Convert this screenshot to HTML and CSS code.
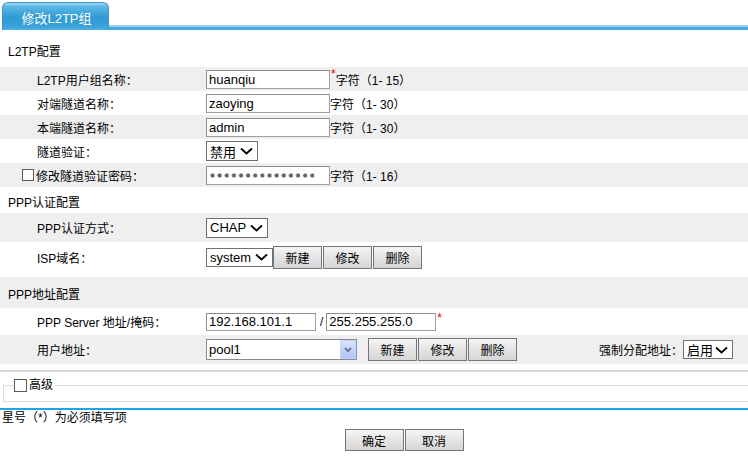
FILE: index.html
```html
<!DOCTYPE html>
<html lang="zh-CN">
<head>
<meta charset="utf-8">
<title>修改L2TP组</title>
<link rel="stylesheet" href="styles.css">
</head>
<body>
<div class="tabbar">
  <div class="tab">修改L2TP组</div>
  <div class="tabline"></div>
</div>

<div class="sect s1">L2TP配置</div>
<div class="row alt">
  <div class="label">L2TP用户组名称：</div>
  <div class="field"><span class="input w124">huanqiu</span><span class="req">*</span><span class="hint">字符<span class="fw">（</span>1- 15<span class="fw">）</span></span></div>
</div>
<div class="row">
  <div class="label">对端隧道名称：</div>
  <div class="field"><span class="input w124">zaoying</span><span class="hint">字符<span class="fw">（</span>1- 30<span class="fw">）</span></span></div>
</div>
<div class="row alt">
  <div class="label">本端隧道名称：</div>
  <div class="field"><span class="input w124">admin</span><span class="hint">字符<span class="fw">（</span>1- 30<span class="fw">）</span></span></div>
</div>
<div class="row">
  <div class="label">隧道验证：</div>
  <div class="field"><span class="select sel-52"><span class="opt">禁用</span><svg class="chev" width="13" height="8" viewBox="0 0 13 8"><path d="M1 1.5 L6.5 6.5 L12 1.5" fill="none" stroke="#000" stroke-width="1.8"/></svg></span></div>
</div>
<div class="row alt">
  <div class="label cb-label"><span class="checkbox"></span>修改隧道验证密码：</div>
  <div class="field"><span class="input w124 pwd"><span class="dots"></span></span><span class="hint">字符<span class="fw">（</span>1- 16<span class="fw">）</span></span></div>
</div>

<div class="sect s2">PPP认证配置</div>
<div class="row alt r-auth">
  <div class="label">PPP认证方式：</div>
  <div class="field"><span class="select sel-62"><span class="opt en">CHAP</span><svg class="chev" width="13" height="8" viewBox="0 0 13 8"><path d="M1 1.5 L6.5 6.5 L12 1.5" fill="none" stroke="#000" stroke-width="1.8"/></svg></span></div>
</div>
<div class="row r-isp">
  <div class="label">ISP域名：</div>
  <div class="field"><span class="select sel-67"><span class="opt en">system</span><svg class="chev" width="13" height="8" viewBox="0 0 13 8"><path d="M1 1.5 L6.5 6.5 L12 1.5" fill="none" stroke="#000" stroke-width="1.8"/></svg></span><span class="btngroup"><span class="btn">新建</span><span class="btn">修改</span><span class="btn">删除</span></span></div>
</div>

<div class="sect s3 alt">PPP地址配置</div>
<div class="row r-server">
  <div class="label">PPP Server 地址/掩码：</div>
  <div class="field"><span class="input w110 h18">192.168.101.1</span><span class="slash">/</span><span class="input w110 h18">255.255.255.0</span><span class="req">*</span></div>
</div>
<div class="row alt r-user">
  <div class="label">用户地址：</div>
  <div class="field">
    <span class="combo"><span class="opt en">pool1</span><span class="combo-btn"><svg width="8" height="6" viewBox="0 0 8 6"><path d="M1 1 L4 4.2 L7 1" fill="none" stroke="#4d6185" stroke-width="1.6"/></svg></span></span>
    <span class="btngroup bg2"><span class="btn">新建</span><span class="btn">修改</span><span class="btn">删除</span></span>
  </div>
  <div class="force">强制分配地址：<span class="select sel-50"><span class="opt">启用</span><svg class="chev" width="13" height="8" viewBox="0 0 13 8"><path d="M1 1.5 L6.5 6.5 L12 1.5" fill="none" stroke="#000" stroke-width="1.8"/></svg></span></div>
</div>

<div class="sep"></div>
<fieldset class="adv">
  <legend><span class="checkbox"></span>高级</legend>
</fieldset>
<div class="blueline"></div>
<div class="note">星号<span class="fw">（</span>*<span class="fw">）</span>为必须填写项</div>
<div class="actions"><span class="btn big">确定</span><span class="btn big">取消</span></div>
</body>
</html>
```

FILE: styles.css
```css
html, body {
  margin: 0;
  padding: 0;
  background: #fff;
}
body {
  font-family: "Liberation Sans", "Noto Sans CJK SC", sans-serif;
  font-size: 12px;
  color: #000;
  width: 748px;
  overflow: hidden;
}

/* tab header */
.tabbar {
  display: flex;
  align-items: flex-end;
  height: 30px;
}
.tab {
  margin-left: 2px;
  width: 107px;
  height: 28px;
  box-sizing: border-box;
  border: 1px solid #3d94c9;
  border-bottom: none;
  border-radius: 6px 6px 0 0;
  background: linear-gradient(#a6d9f4 0%, #5bb7e6 14%, #2f99d3 55%, #3aa1d9 85%, #4cafe2 100%);
  color: #fff;
  font-size: 13px;
  display: flex;
  align-items: center;
  justify-content: center;
  padding-top: 1px;
  padding-left: 2px;
}
.tabline {
  flex: 1;
  height: 5px;
  box-sizing: border-box;
  border-top: 2px solid #96d0ec;
  background: #46abe0;
}

/* section headers */
.sect {
  display: flex;
  align-items: center;
  padding-left: 8px;
  box-sizing: border-box;
}
.s1 { height: 37px; padding-top: 3px; }
.s2 { height: 26px; padding-top: 2px; }
.s3 { height: 31px; margin-top: 5px; padding-top: 1px; }

.alt { background: #efefef; }

/* rows */
.row {
  display: flex;
  align-items: center;
  height: 24px;
}
.r-auth { height: 29px; }
.r-isp { height: 30px; }
.r-server { height: 27px; }
.r-user { height: 29px; }

.label {
  width: 206px;
  flex: none;
  box-sizing: border-box;
  padding-left: 37px;
  display: flex;
  align-items: center;
}
.cb-label { padding-left: 22px; }
.cb-label .checkbox { margin-right: 2px; }

.field {
  display: flex;
  align-items: center;
}

.checkbox {
  display: inline-block;
  width: 12px;
  height: 12px;
  box-sizing: border-box;
  border: 1px solid #5a5a5a;
  background: #fff;
  flex: none;
}

.input {
  display: inline-flex;
  align-items: center;
  height: 19px;
  box-sizing: border-box;
  border: 1px solid #a0a0a0;
  border-top-color: #8c8c8c;
  border-left-color: #8c8c8c;
  background: #fff;
  padding-left: 2px;
  font-size: 13px;
  white-space: nowrap;
  overflow: hidden;
}
.w124 { width: 124px; }
.w110 { width: 110px; }
.h18 { height: 18px; }

.pwd { padding-left: 3px; }
.dots {
  display: block;
  width: 107px;
  height: 5px;
  background: radial-gradient(circle at 2.5px 2.5px, #666 1.8px, rgba(102,102,102,0) 2.4px) 0 0 / 7.13px 5px repeat-x;
}

.req {
  color: #e00000;
  font-size: 12px;
  align-self: flex-start;
  margin-top: -2px;
  margin-left: 1px;
  line-height: 12px;
}
.r-server .req { margin-left: 1px; margin-top: -1px; }
.hint { white-space: nowrap; }
.fw { font-family: "Noto Sans CJK SC", sans-serif; }
.slash { margin: 0 3px 0 4px; font-size: 12px; }

/* select boxes */
.select {
  display: inline-flex;
  align-items: center;
  justify-content: space-between;
  height: 20px;
  box-sizing: border-box;
  border: 1px solid #707070;
  background: #fff;
  padding: 0 4px 0 3px;
  font-size: 13px;
}
.sel-52 { width: 52px; }
.sel-62 { width: 62px; }
.sel-67 { width: 67px; height: 19px; }
.sel-50 { width: 50px; height: 19px; }
.opt { white-space: nowrap; }
.opt.en { font-size: 13px; }
.chev { flex: none; }

/* XP style combo */
.combo {
  display: inline-flex;
  align-items: center;
  justify-content: space-between;
  width: 151px;
  height: 21px;
  box-sizing: border-box;
  border: 1px solid #8a8a8a;
  border-right-color: #7f9db9;
  background: #fff;
  padding-left: 2px;
}
.combo-btn {
  width: 16px;
  height: 19px;
  box-sizing: border-box;
  border: 1px solid #c3d3fd;
  background: linear-gradient(#dce6fd, #bccdf8 60%, #b3c6f6);
  display: flex;
  align-items: center;
  justify-content: center;
}

/* buttons */
.btngroup {
  display: flex;
  gap: 1px;
}
.bg2 { margin-left: 11px; }
.btn {
  display: inline-flex;
  align-items: center;
  justify-content: center;
  width: 49px;
  height: 23px;
  box-sizing: border-box;
  border: 1px solid #767676;
  background: linear-gradient(#f6f6f6, #e4e4e4 50%, #d6d6d6);
  font-size: 12px;
  color: #000;
}
.btn.big {
  width: 59px;
  height: 22px;
}

.force {
  margin-left: auto;
  margin-right: 15px;
  display: flex;
  align-items: center;
}

/* bottom */
.sep {
  margin-top: 6px;
  height: 2px;
  background: #d6d6d6;
}
.adv {
  margin: 6px 0 0 3px;
  padding: 0 0 9px 0;
  border: 1px solid #dddddd;
  border-right: none;
  min-inline-size: 0;
}
.adv legend {
  margin-left: 10px;
  padding: 0 2px 0 0;
  height: 14px;
  line-height: 14px;
  display: flex;
  align-items: center;
  font-size: 12px;
}
.adv legend .checkbox {
  width: 13px;
  height: 13px;
  margin-right: 2px;
}
.blueline {
  margin-top: 6px;
  height: 2px;
  background: #1ba6ea;
}
.note {
  padding-left: 2px;
  height: 14px;
  line-height: 14px;
  white-space: nowrap;
}
.actions {
  display: flex;
  justify-content: center;
  gap: 1px;
  padding-left: 60px;
  margin-top: 5px;
}
```
